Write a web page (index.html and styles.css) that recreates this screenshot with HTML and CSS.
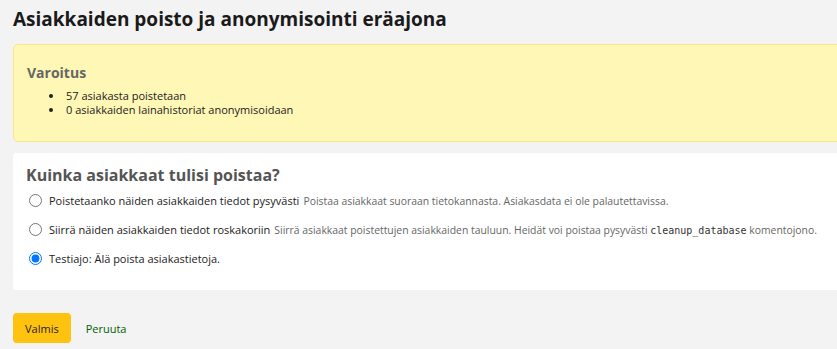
FILE: index.html
```html
<!DOCTYPE html>
<html lang="fi">
<head>
    <meta charset="UTF-8">
    <title>Asiakkaiden poisto ja anonymisointi eräajona</title>
    <link rel="stylesheet" href="styles.css">
</head>
<body>
    <main class="main">
        <h1>Asiakkaiden poisto ja anonymisointi eräajona</h1>
        <div class="dialog alert">
            <h3>Varoitus</h3>
            <ul>
                <li>57 asiakasta poistetaan</li>
                <li>0 asiakkaiden lainahistoriat anonymisoidaan</li>
            </ul>
        </div>
        <form class="page-section">
            <h2>Kuinka asiakkaat tulisi poistaa?</h2>
            <label class="option">
                <input type="radio" name="op">
                <span>Poistetaanko näiden asiakkaiden tiedot pysyvästi</span>
                <span class="hint">Poistaa asiakkaat suoraan tietokannasta. Asiakasdata ei ole palautettavissa.</span>
            </label>
            <label class="option">
                <input type="radio" name="op">
                <span>Siirrä näiden asiakkaiden tiedot roskakoriin</span>
                <span class="hint">Siirrä asiakkaat poistettujen asiakkaiden tauluun. Heidät voi poistaa pysyvästi <code>cleanup_database</code> komentojono.</span>
            </label>
            <label class="option">
                <input type="radio" name="op" checked>
                <span>Testiajo: Älä poista asiakastietoja.</span>
            </label>
        </form>
        <div class="actions">
            <button class="btn-primary" type="button">Valmis</button>
            <a class="cancel" href="#">Peruuta</a>
        </div>
    </main>
</body>
</html>
```

FILE: styles.css
```css
html, body {
    overflow: hidden;
}
body {
    margin: 0;
    background-color: #f3f3f3;
    font-family: "Open Sans", "Noto Sans", sans-serif;
    font-size: 11px;
    color: #000;
}
.main {
    padding: 6px 0 0 13px;
    width: 900px;
}
h1 {
    font-size: 19px;
    font-weight: 700;
    color: #1a1a1a;
    margin: 0 0 12px 0;
    line-height: 26px;
}
.dialog.alert {
    background-color: #fff7b5;
    border: 1px solid #fbe48a;
    border-radius: 5px;
    padding: 18px 13px 24px 13px;
    margin-bottom: 11px;
}
.dialog h3 {
    font-size: 14px;
    font-weight: 700;
    color: #666;
    margin: 0 0 6px 0;
    line-height: 20px;
}
.dialog ul {
    margin: 0;
    padding-left: 37px;
    line-height: 14px;
    color: #222;
}
.dialog li {
    padding-left: 2px;
}
.page-section {
    background: #fff;
    border-radius: 3px;
    padding: 11px 13px 17px 13px;
    margin-bottom: 23px;
}
.page-section h2 {
    font-size: 16px;
    font-weight: 700;
    color: #555;
    margin: 0;
    line-height: 22px;
}
.option {
    display: flex;
    align-items: center;
    gap: 4px;
    height: 29px;
    color: #222;
}
.option input {
    margin: 0 3px 0 3px;
    width: 13px;
    height: 13px;
}
.hint {
    font-size: 10.4px;
    color: #666;
}
.hint code {
    font-family: "DejaVu Sans Mono", monospace;
    font-size: 10px;
    color: #333;
}
.actions {
    display: flex;
    align-items: center;
    gap: 15px;
}
.btn-primary {
    background-color: #ffc20e;
    border: none;
    border-radius: 4px;
    padding: 0 12px;
    height: 30px;
    font-family: inherit;
    font-size: 11px;
    color: #222;
}
.cancel {
    color: #006100;
    text-decoration: none;
}
```
